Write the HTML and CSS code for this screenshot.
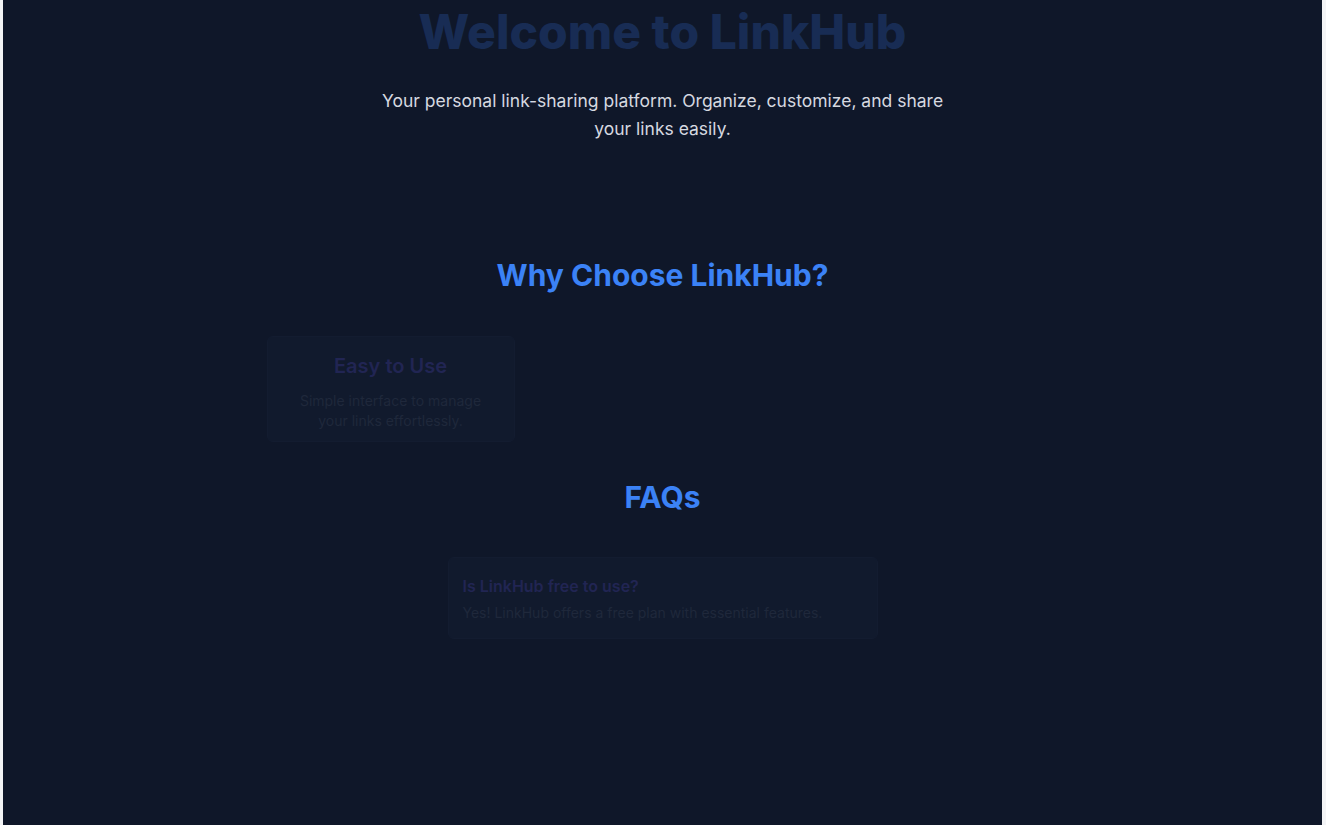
FILE: index.html
```html
<!DOCTYPE html>
<html lang="en">
<head>
<meta charset="utf-8">
<title>LinkHub</title>
<link rel="stylesheet" href="styles.css">
</head>
<body>
<main class="page">
  <section class="hero">
    <h1 class="hero-title">Welcome to LinkHub</h1>
    <p class="hero-text">Your personal link-sharing platform. Organize, customize, and share your links easily.</p>
  </section>

  <section class="features">
    <h2 class="section-title">Why Choose LinkHub?</h2>
    <div class="feature-grid">
      <div class="feature-card">
        <h3 class="feature-title">Easy to Use</h3>
        <p class="feature-text">Simple interface to manage your links effortlessly.</p>
      </div>
      <div class="feature-slot"></div>
      <div class="feature-slot"></div>
    </div>
  </section>

  <section class="faqs">
    <h2 class="section-title">FAQs</h2>
    <div class="faq-card">
      <h3 class="faq-q">Is LinkHub free to use?</h3>
      <p class="faq-a">Yes! LinkHub offers a free plan with essential features.</p>
    </div>
  </section>
</main>
</body>
</html>
```

FILE: styles.css
```css
html {
  background: #f3f4f6;
  height: 100%;
}
body {
  margin: 0;
  height: 100%;
  font-family: Inter, "Noto Sans", sans-serif;
}
.page {
  margin: 0 4px 0 3px;
  min-height: 100%;
  background: #0f1729;
  display: flex;
  flex-direction: column;
  align-items: center;
  padding-top: 8px;
  box-sizing: border-box;
}
.hero {
  display: flex;
  flex-direction: column;
  align-items: center;
  text-align: center;
}
.hero-title {
  margin: 0;
  font-size: 48px;
  line-height: 48px;
  font-weight: 800;
  color: #182c54;
}
.hero-text {
  margin: 31px 0 0;
  width: 600px;
  font-size: 17.5px;
  line-height: 28px;
  color: #d6d9e0;
}
.features {
  margin-top: 114px;
  display: flex;
  flex-direction: column;
  align-items: center;
}
.section-title {
  margin: 0;
  font-size: 30px;
  line-height: 36px;
  font-weight: 700;
  color: #3b82f6;
  text-align: center;
}
.feature-grid {
  margin-top: 43px;
  display: grid;
  grid-template-columns: repeat(3, 248px);
  gap: 24px;
}
.feature-card {
  box-sizing: border-box;
  padding: 15px 24px 10px;
  border: 1px solid #131c30;
  border-radius: 6px;
  background: #111a2d;
  text-align: center;
}
.feature-title {
  margin: 0 0 11px;
  font-size: 20px;
  line-height: 28px;
  font-weight: 600;
  color: #212553;
}
.feature-text {
  margin: 0;
  font-size: 14px;
  line-height: 20px;
  color: #1f283b;
}
.faqs {
  margin-top: 37px;
  display: flex;
  flex-direction: column;
  align-items: center;
}
.faq-card {
  margin-top: 42px;
  width: 430px;
  box-sizing: border-box;
  padding: 16px 14px 15px;
  border: 1px solid #131c30;
  border-radius: 6px;
  background: #111a2d;
}
.faq-q {
  margin: 0 0 5px;
  font-size: 16px;
  line-height: 24px;
  font-weight: 600;
  color: #212553;
}
.faq-a {
  margin: 0;
  font-size: 14px;
  line-height: 20px;
  color: #1f283b;
}
```
